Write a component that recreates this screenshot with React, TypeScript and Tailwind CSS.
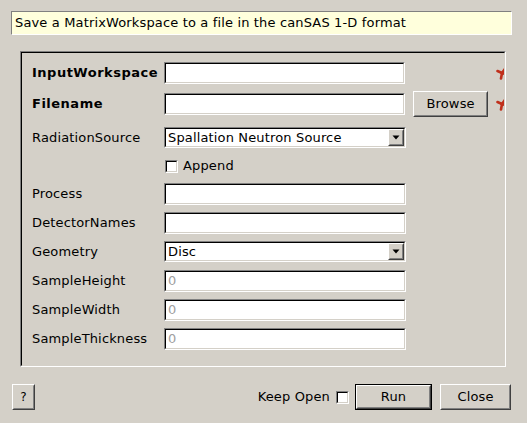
import React from "react";

const Sunken = ({ className = "", children }: { className?: string; children?: React.ReactNode }) => (
  <div className={"border border-t-[#808080] border-l-[#808080] border-r-white border-b-white " + className}>
    <div className="w-full h-full border border-t-black border-l-black border-r-[#d4d0c8] border-b-[#d4d0c8] bg-white flex items-center">
      {children}
    </div>
  </div>
);

const Raised = ({ className = "", children }: { className?: string; children?: React.ReactNode }) => (
  <div className={"border border-t-white border-l-white border-r-[#404040] border-b-[#404040] " + className}>
    <div className="w-full h-full border border-t-[#d4d0c8] border-l-[#d4d0c8] border-r-[#808080] border-b-[#808080] bg-[#d4d0c8] flex items-center justify-center">
      {children}
    </div>
  </div>
);

const TextInput = ({ placeholder }: { placeholder?: string }) => (
  <Sunken className="w-[242px] h-[22px]">
    <span className="pl-[2px] text-[#a0a0a0]">{placeholder}</span>
  </Sunken>
);

const Combo = ({ value }: { value: string }) => (
  <Sunken className="w-[242px] h-[21px]">
    <span className="pl-[2px] flex-1 text-black">{value}</span>
    <Raised className="w-[16px] h-[17px] mr-0">
      <svg width="8" height="5" viewBox="0 0 8 5">
        <polygon points="0.5,0.5 7.5,0.5 4,4.5" fill="black" />
      </svg>
    </Raised>
  </Sunken>
);

const Star = () => (
  <div className="w-[8px] h-[14px] overflow-hidden ml-[8px]">
    <svg width="14" height="14" viewBox="0 0 14 14">
      <g stroke="#c0301c" strokeWidth="2.6" strokeLinecap="round">
        <line x1="6" y1="7" x2="10" y2="1.5" />
        <line x1="6" y1="7" x2="1.5" y2="5" />
        <line x1="6" y1="7" x2="5" y2="12.5" />
        <line x1="6" y1="7" x2="12" y2="9" />
      </g>
    </svg>
  </div>
);

const Label = ({ children, bold }: { children: React.ReactNode; bold?: boolean }) => (
  <div className={"w-[132px] " + (bold ? "font-bold tracking-[0.5px]" : "")}>{children}</div>
);

const Checkbox = () => (
  <div className="w-[13px] h-[13px] border border-t-[#808080] border-l-[#808080] border-r-white border-b-white">
    <div className="w-full h-full border border-t-black border-l-black border-r-[#d4d0c8] border-b-[#d4d0c8] bg-white" />
  </div>
);

export default function App() {
  return (
    <div
      className="w-[527px] h-[423px] bg-[#d4d0c8] text-[13px] tracking-[0.15px] text-black overflow-hidden flex flex-col"
      style={{ fontFamily: '"DejaVu Sans", sans-serif' }}
    >
      <div className="mt-[11px] ml-[11px] w-[501px] h-[24px] bg-[#ffffdc] border border-t-[#808080] border-l-[#808080] border-r-white border-b-white flex items-center pl-[3px]">
        Save a MatrixWorkspace to a file in the canSAS 1-D format
      </div>

      <div className="mt-[16px] ml-[20px] w-[486px] h-[316px] border border-t-[#808080] border-l-[#808080] border-r-white border-b-white">
        <div className="w-full h-full border border-t-black border-l-black border-r-[#d4d0c8] border-b-[#d4d0c8] overflow-hidden pl-[10px] flex flex-col">
          <div className="mt-[9px] h-[22px] flex items-center">
            <Label bold>InputWorkspace</Label>
            <TextInput />
            <div className="w-[75px] ml-[8px]" />
            <Star />
          </div>
          <div className="mt-[7px] h-[26px] flex items-center">
            <Label bold>Filename</Label>
            <TextInput />
            <Raised className="w-[75px] h-[26px] ml-[8px]">Browse</Raised>
            <Star />
          </div>
          <div className="mt-[10px] h-[21px] flex items-center">
            <Label>RadiationSource</Label>
            <Combo value="Spallation Neutron Source" />
          </div>
          <div className="mt-[8px] h-[20px] flex items-center">
            <div className="w-[132px]" />
            <div className="ml-[1px]"><Checkbox /></div>
            <span className="ml-[5px]">Append</span>
          </div>
          <div className="mt-[7px] h-[22px] flex items-center">
            <Label>Process</Label>
            <TextInput />
          </div>
          <div className="mt-[7px] h-[22px] flex items-center">
            <Label>DetectorNames</Label>
            <TextInput />
          </div>
          <div className="mt-[7px] h-[21px] flex items-center">
            <Label>Geometry</Label>
            <Combo value="Disc" />
          </div>
          <div className="mt-[8px] h-[22px] flex items-center">
            <Label>SampleHeight</Label>
            <TextInput placeholder="0" />
          </div>
          <div className="mt-[7px] h-[22px] flex items-center">
            <Label>SampleWidth</Label>
            <TextInput placeholder="0" />
          </div>
          <div className="mt-[7px] h-[22px] flex items-center">
            <Label>SampleThickness</Label>
            <TextInput placeholder="0" />
          </div>
        </div>
      </div>

      <div className="mt-[17px] h-[26px] flex items-center pl-[12px] pr-[16px]">
        <Raised className="w-[23px] h-[26px] text-[12px]">?</Raised>
        <div className="flex-1" />
        <span>Keep Open</span>
        <div className="ml-[6px] mr-[6px]"><Checkbox /></div>
        <div className="border border-black">
          <Raised className="w-[75px] h-[24px]">Run</Raised>
        </div>
        <Raised className="w-[71px] h-[26px] ml-[8px]">Close</Raised>
      </div>
    </div>
  );
}
